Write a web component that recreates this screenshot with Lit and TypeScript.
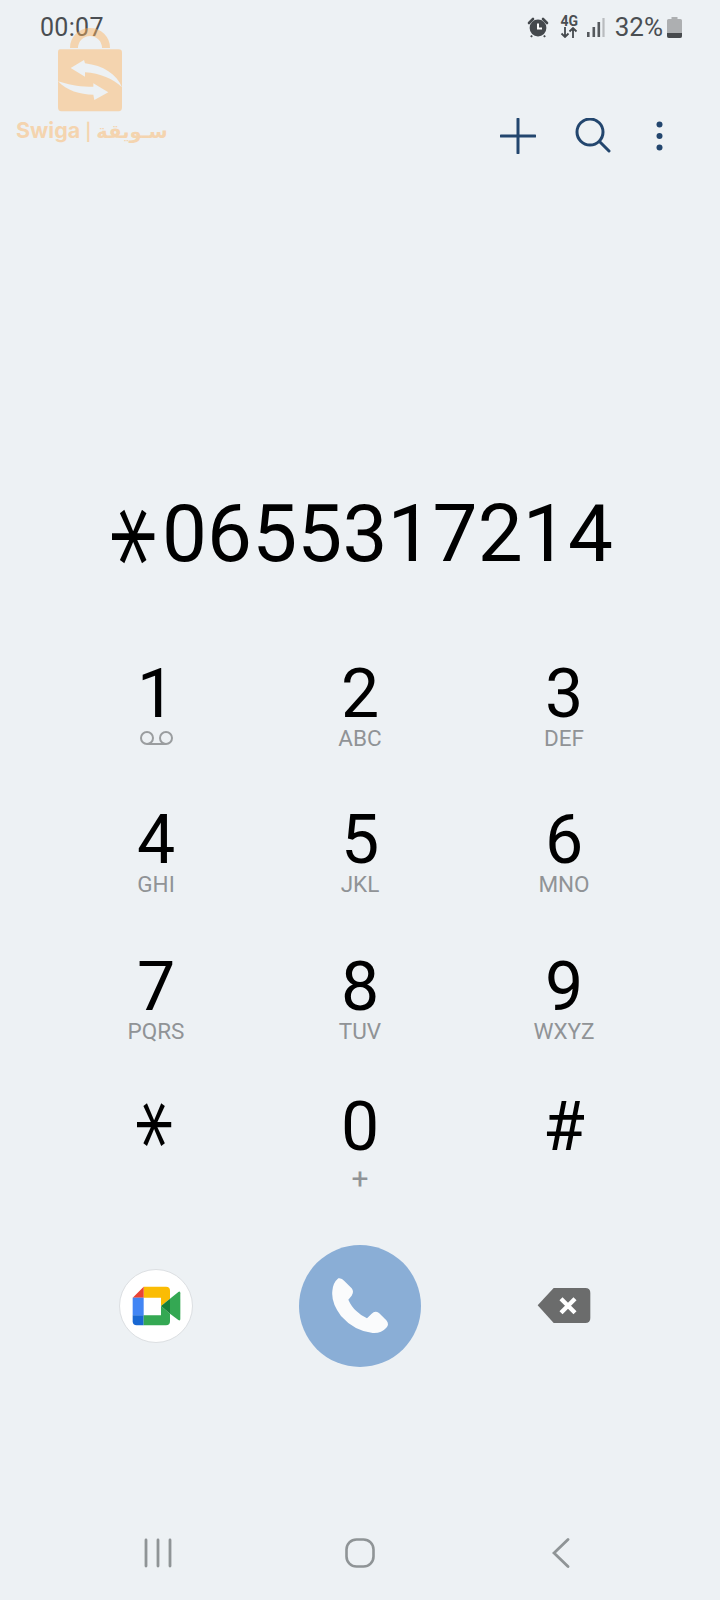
import { LitElement, html, css } from "lit";
import { customElement } from "lit/decorators.js";

const KEYS: [string, string][] = [
  ["1", ""], ["2", "ABC"], ["3", "DEF"],
  ["4", "GHI"], ["5", "JKL"], ["6", "MNO"],
  ["7", "PQRS"], ["8", "TUV"], ["9", "WXYZ"],
  ["*", ""], ["0", "+"], ["#", ""],
];

@customElement("app-root")
export class AppRoot extends LitElement {
  static styles = css`
    :host {
      display: block;
      width: 720px;
      height: 1600px;
      background: #edf1f4;
      font-family: Roboto, "Liberation Sans", sans-serif;
      color: #000;
    }
    svg { display: block; }
    .page { position: relative; height: 1600px; display: flex; flex-direction: column; overflow: hidden; }
    .status { height: 54px; display: flex; align-items: center; padding: 0 38px 0 40px; color: #4a4e52; font-size: 25px; }
    .time { letter-spacing: .3px; }
    .status-right { margin-left: auto; display: flex; align-items: center; }
    .net { width: 19px; margin-left: 11px; display: flex; flex-direction: column; align-items: center; }
    .net b { font-size: 14px; line-height: 11px; font-weight: 700; }
    .signal { margin-left: 8px; }
    .pct { margin-left: 10px; margin-right: 4px; font-size: 26px; }
    .actions { height: 60px; margin-top: 52px; display: flex; justify-content: flex-end; align-items: center; padding-right: 57px; }
    .act-search { margin-left: 39px; margin-right: 45px; }
    .number { margin-top: 313px; height: 110px; display: flex; justify-content: center; align-items: center; font-size: 80px; line-height: 110px; padding-right: 1px; letter-spacing: .15px; }
    .star-big { display: inline-block; width: 56px; text-align: center; font-family: "DejaVu Sans", sans-serif; font-size: 92px; transform: translate(-5px, 16px) rotate(90deg) scale(1.32, 1); transform-origin: 50% 38%; }
    .keys { margin-top: 70px; padding: 0 54px; display: grid; grid-template-columns: repeat(3, 204px); grid-template-rows: 146px 147px 140px 100px; }
    .key { display: flex; flex-direction: column; align-items: center; }
    .digit { font-size: 68px; line-height: 70px; height: 70px; }
    .letters { font-size: 22.5px; line-height: 26px; color: #909396; margin-top: -4px; height: 26px; display: flex; align-items: center; }
    .plus { font-size: 30px; margin-top: 4px; }
    .star { display: inline-block; font-family: "DejaVu Sans", sans-serif; font-size: 75px; line-height: 70px; transform: translate(-5px, 6px) rotate(90deg) scale(1.3, 1); transform-origin: 50% 38%; }
    .bottom { margin-top: 53px; padding: 0 54px; display: grid; grid-template-columns: repeat(3, 204px); align-items: center; justify-items: center; height: 122px; }
    .meet { width: 74px; height: 74px; border-radius: 50%; background: #fff; box-sizing: border-box; border: 1px solid #dcdfe2; display: flex; }
    .call { width: 122px; height: 122px; border-radius: 50%; background: #8aaed6; display: flex; align-items: center; justify-content: center; }
    .nav { margin-top: auto; display: flex; justify-content: space-between; padding: 0 150px 31px 144px; height: 32px; align-items: center; }
    .home { margin-right: 5px; }
    .logo { position: absolute; left: 16px; top: 24px; width: 160px; opacity: .46; color: #feb45f; pointer-events: none; }
    .logo svg { margin-left: 34px; }
    .brand { margin-top: -2px; display: flex; align-items: baseline; gap: 5px; font-family: Inter, sans-serif; font-weight: 700; font-size: 21.5px; line-height: 26px; white-space: nowrap; }
    .brand .bar { font-size: 17px; font-weight: 600; }
    .brand .ar { font-family: "DejaVu Sans", sans-serif; font-weight: 700; font-size: 19.5px; }
  `;

  private alarm() {
    return html`<svg width="22" height="22" viewBox="0 0 22 22">
      <circle cx="11" cy="12" r="8.4" fill="#45494d"/>
      <path d="M2 7 L6 3 M20 7 L16 3" stroke="#45494d" stroke-width="2.6" stroke-linecap="round"/>
      <path d="M5 19.5 L4 21 M17 19.5 L18 21" stroke="#45494d" stroke-width="2"/>
      <path d="M11 7.5 V12.5 H15" fill="none" stroke="#fff" stroke-width="2"/>
    </svg>`;
  }

  private net() {
    return html`<div class="net"><b>4G</b>
      <svg width="18" height="11" viewBox="0 0 18 11" fill="none" stroke="#45494d" stroke-width="1.8">
        <path d="M5 0 V10 M1.5 6.5 L5 10 L8.5 6.5 M13 11 V1 M9.5 4.5 L13 1 L16.5 4.5"/>
      </svg></div>`;
  }

  private signal() {
    return html`<svg class="signal" width="18" height="19" viewBox="0 0 18 19">
      <rect x="0" y="14" width="2.6" height="5" fill="#55595d"/>
      <rect x="5.5" y="9" width="2.6" height="10" fill="#55595d"/>
      <rect x="10.5" y="4" width="2.6" height="15" fill="#55595d"/>
      <rect x="15.4" y="0" width="2.2" height="19" fill="#b9bcbf"/>
    </svg>`;
  }

  private battery() {
    return html`<svg width="15" height="21" viewBox="0 0 15 21">
      <path d="M4.5 0 H10.5 V2 H13.5 Q15 2 15 3.5 V19 Q15 21 13 21 H2 Q0 21 0 19 V3.5 Q0 2 1.5 2 H4.5 Z" fill="#adafb1"/>
      <path d="M0 16 H15 V19 Q15 21 13 21 H2 Q0 21 0 19 Z" fill="#474a4d"/>
    </svg>`;
  }

  private letters(k: string, l: string) {
    if (k === "1") {
      return html`<div class="letters"><svg width="33" height="14" viewBox="0 0 33 14" fill="none" stroke="#9a9d9f" stroke-width="2">
        <circle cx="7" cy="7" r="6"/><circle cx="26" cy="7" r="6"/><path d="M7 13 H26"/></svg></div>`;
    }
    if (k === "0") return html`<div class="letters plus">+</div>`;
    return l ? html`<div class="letters">${l}</div>` : "";
  }

  render() {
    return html`<div class="page">
      <div class="status">
        <span class="time">00:07</span>
        <div class="status-right">
          ${this.alarm()} ${this.net()} ${this.signal()}
          <span class="pct">32%</span>
          ${this.battery()}
        </div>
      </div>

      <div class="actions">
        <svg width="36" height="36" viewBox="0 0 36 36" stroke="#23466e" stroke-width="3" stroke-linecap="round"><path d="M18 1 V35 M1 18 H35"/></svg>
        <svg class="act-search" width="36" height="36" viewBox="0 0 36 36" fill="none" stroke="#23466e" stroke-width="3" stroke-linecap="round"><circle cx="15" cy="14" r="13"/><path d="M25 24 L34 33"/></svg>
        <svg width="7" height="30" viewBox="0 0 7 30" fill="#23466e"><circle cx="3.5" cy="3.5" r="3"/><circle cx="3.5" cy="15" r="3"/><circle cx="3.5" cy="26.5" r="3"/></svg>
      </div>

      <div class="number"><span class="star-big">*</span><span>0655317214</span></div>

      <div class="keys">
        ${KEYS.map(([k, l]) => html`<div class="key">
          ${k === "*" ? html`<div class="digit"><span class="star">*</span></div>` : html`<div class="digit">${k}</div>`}
          ${this.letters(k, l)}
        </div>`)}
      </div>

      <div class="bottom">
        <div class="meet">
          <svg width="72" height="72" viewBox="-3 12 216 216">
            <path d="M68 62 H135 Q147 62 147 74 V98 L120 120 V95 H68 Z" fill="#fbbc04"/>
            <path d="M35 95 L68 62 V95 Z" fill="#ea4335"/>
            <rect x="35" y="95" width="33" height="53" fill="#4285f4"/>
            <path d="M35 148 H68 V178 H47 Q35 178 35 166 Z" fill="#1967d2"/>
            <path d="M68 148 H120 V120 L147 143 V166 Q147 178 135 178 H68 Z" fill="#34a853"/>
            <path d="M120 120 L147 98 V143 Z" fill="#188038"/>
            <path d="M147 98 L172 78 Q178 74 178 82 V158 Q178 166 172 162 L147 143 Z" fill="#34a853"/>
          </svg>
        </div>
        <div class="call">
          <svg width="58" height="58" viewBox="690 138 174 174" fill="#fafbfc">
            <path d="M712 142 Q722 140 730 150 L752 172 Q760 182 752 194 L742 206 Q752 228 766 240 Q780 254 798 262 L812 248 Q822 238 834 246 L856 268 Q866 280 856 290 Q840 308 815 306 Q760 300 720 255 Q690 215 694 180 Q696 155 712 142 Z"/>
          </svg>
        </div>
        <svg width="54" height="36" viewBox="110 83 162 108">
          <path d="M160 83 H255 Q270 83 270 98 V173 Q270 188 255 188 H160 L112 135 Z" fill="#6b6c6c"/>
          <path d="M182 115 L224 157 M224 115 L182 157" stroke="#fff" stroke-width="13"/>
        </svg>
      </div>

      <div class="nav">
        <svg width="28" height="30" viewBox="0 0 28 30" stroke="#8f9496" stroke-width="2.8" stroke-linecap="round"><path d="M2 2 V28 M14 2 V28 M26 2 V28"/></svg>
        <svg class="home" width="30" height="30" viewBox="0 0 30 30" fill="none" stroke="#8f9496" stroke-width="2.6"><rect x="1.5" y="1.5" width="27" height="27" rx="10"/></svg>
        <svg width="18" height="30" viewBox="0 0 18 30" fill="none" stroke="#8f9496" stroke-width="2.8" stroke-linecap="round"><path d="M16 1.5 L2 15 L16 28.5"/></svg>
      </div>

      <div class="logo">
        <svg width="80" height="95" viewBox="0 0 240 285" fill="currentColor">
          <path d="M72 72 A48 48 0 0 1 168 72" fill="none" stroke="currentColor" stroke-width="24"/>
          <path fill-rule="evenodd" d="M30 76 H206 Q216 76 216 86 V250 Q216 262 206 262 H34 Q24 262 24 250 V86 Q24 76 30 76 Z
            M216 190 C200 150 160 125 105 118 L102 108 L62 132 L105 158 L105 145 C150 148 190 165 216 190 Z
            M24 172 C50 200 90 212 130 212 L133 228 L175 205 L130 178 L130 188 C90 190 55 182 24 172 Z"/>
        </svg>
        <div class="brand"><span>Swiga</span><span class="bar">|</span><span class="ar" dir="rtl">سـويقة</span></div>
      </div>
    </div>`;
  }
}
